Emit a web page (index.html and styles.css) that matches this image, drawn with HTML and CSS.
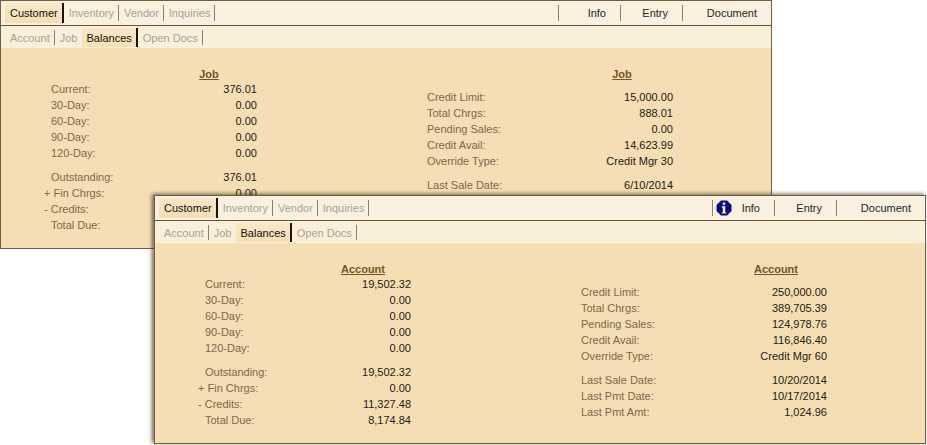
FILE: index.html
```html
<!DOCTYPE html>
<html lang="en">
<head>
<meta charset="utf-8">
<title>Balances</title>
<link rel="stylesheet" href="styles.css">
</head>
<body>
<section class="window window-back">
  <nav class="bar main-bar">
    <a class="tab active">Customer</a><a class="tab">Inventory</a><a class="tab">Vendor</a><a class="tab">Inquiries</a>
    <div class="actions">
      <a class="action"><span class="action-text">Info</span></a>
      <a class="action"><span class="action-text">Entry</span></a>
      <a class="action action-wide"><span class="action-text">Document</span></a>
    </div>
  </nav>
  <nav class="bar sub-bar">
    <a class="tab">Account</a><a class="tab tab-plain">Job</a><a class="tab active">Balances</a><a class="tab">Open Docs</a>
  </nav>
  <div class="content">
    <div class="grid grid-left">
      <h2 class="heading">Job</h2>
      <span class="label">Current:</span><span class="value">376.01</span>
      <span class="label">30-Day:</span><span class="value">0.00</span>
      <span class="label">60-Day:</span><span class="value">0.00</span>
      <span class="label">90-Day:</span><span class="value">0.00</span>
      <span class="label">120-Day:</span><span class="value">0.00</span>
      <span class="spacer"></span>
      <span class="label">Outstanding:</span><span class="value">376.01</span>
      <span class="label"><i class="sign">+</i> Fin Chrgs:</span><span class="value">0.00</span>
      <span class="label"><i class="sign">-</i> Credits:</span><span class="value"></span>
      <span class="label">Total Due:</span><span class="value"></span>
    </div>
    <div class="grid grid-right">
      <h2 class="heading">Job</h2>
      <span class="label">Credit Limit:</span><span class="value">15,000.00</span>
      <span class="label">Total Chrgs:</span><span class="value">888.01</span>
      <span class="label">Pending Sales:</span><span class="value">0.00</span>
      <span class="label">Credit Avail:</span><span class="value">14,623.99</span>
      <span class="label">Override Type:</span><span class="value">Credit Mgr 30</span>
      <span class="spacer"></span>
      <span class="label">Last Sale Date:</span><span class="value">6/10/2014</span>
    </div>
  </div>
</section>
<section class="window window-front">
  <nav class="bar main-bar">
    <a class="tab active">Customer</a><a class="tab">Inventory</a><a class="tab">Vendor</a><a class="tab">Inquiries</a>
    <div class="actions">
      <a class="action">
        <svg class="info-icon" viewBox="0 0 16 16" width="16" height="16" aria-hidden="true">
          <path d="M5 .5h6L15.500 5v6L11 15.500H5L.5 11V5z" fill="#0b0b80"/>
          <path d="M6.800 2.600h2.400v2.200H6.800zM5.800 6.200h3.400v6.200h1.100v1.200H5.700v-1.200h1.100V7.400h-1z" fill="#fff"/>
        </svg>
        <span class="action-text">Info</span>
      </a>
      <a class="action"><span class="action-text">Entry</span></a>
      <a class="action action-wide"><span class="action-text">Document</span></a>
    </div>
  </nav>
  <nav class="bar sub-bar">
    <a class="tab">Account</a><a class="tab tab-plain">Job</a><a class="tab active">Balances</a><a class="tab">Open Docs</a>
  </nav>
  <div class="content">
    <div class="grid grid-left">
      <h2 class="heading">Account</h2>
      <span class="label">Current:</span><span class="value">19,502.32</span>
      <span class="label">30-Day:</span><span class="value">0.00</span>
      <span class="label">60-Day:</span><span class="value">0.00</span>
      <span class="label">90-Day:</span><span class="value">0.00</span>
      <span class="label">120-Day:</span><span class="value">0.00</span>
      <span class="spacer"></span>
      <span class="label">Outstanding:</span><span class="value">19,502.32</span>
      <span class="label"><i class="sign">+</i> Fin Chrgs:</span><span class="value">0.00</span>
      <span class="label"><i class="sign">-</i> Credits:</span><span class="value">11,327.48</span>
      <span class="label">Total Due:</span><span class="value">8,174.84</span>
    </div>
    <div class="grid grid-right">
      <h2 class="heading">Account</h2>
      <span class="label">Credit Limit:</span><span class="value">250,000.00</span>
      <span class="label">Total Chrgs:</span><span class="value">389,705.39</span>
      <span class="label">Pending Sales:</span><span class="value">124,978.76</span>
      <span class="label">Credit Avail:</span><span class="value">116,846.40</span>
      <span class="label">Override Type:</span><span class="value">Credit Mgr 60</span>
      <span class="spacer"></span>
      <span class="label">Last Sale Date:</span><span class="value">10/20/2014</span>
      <span class="label">Last Pmt Date:</span><span class="value">10/17/2014</span>
      <span class="label">Last Pmt Amt:</span><span class="value">1,024.96</span>
    </div>
  </div>
</section>
</body>
</html>
```
FILE: styles.css
```css
* { box-sizing: border-box; }
html, body { margin: 0; height: 100%; }
body {
  position: relative;
  background: #fff;
  font-family: "Liberation Sans", Arial, sans-serif;
  font-size: 11px;
  color: #1e1a10;
  overflow: hidden;
}
.window {
  position: absolute;
  width: 772px;
  height: 249px;
  display: flex;
  flex-direction: column;
  background: #f5deb3;
  border: 1px solid #6f5f45;
}
.window-back { left: 0; top: 0; }
.window-front {
  left: 154px;
  top: 195px;
  box-shadow: -2px -1px 4px rgba(60, 50, 30, .75);
}
.bar { display: flex; align-items: stretch; flex: none; }
.main-bar {
  height: 25px;
  padding: 2px 0 2px 4px;
  background: #f9f0df;
  border-bottom: 1px solid #6b5330;
}
.sub-bar {
  height: 22px;
  padding: 2px 0 1px 4px;
  background: #f9efda;
}
.tab {
  display: flex;
  align-items: center;
  padding: 0 4px 0 5px;
  margin: 2px 0;
  color: #a8a294;
  border-right: 1px solid #8a8271;
}
.tab-plain { border-right: 0; }
.tab.active {
  margin: 0;
  color: #14110a;
  background: linear-gradient(#f7e8c9, #f5deb3);
  border-right: 2px solid #1a1208;
}
.actions { margin-left: auto; display: flex; align-items: stretch; }
.action {
  width: 62px;
  display: flex;
  align-items: center;
  margin: 2px 0;
  padding: 0 14px 0 3px;
  border-left: 1px solid #8a8271;
  color: #2a2418;
}
.action-wide { width: 89px; }
.action-text { margin-left: auto; }
.info-icon { flex: none; }
.content {
  flex: 1;
  display: flex;
  padding: 18px 0 0 43px;
  color: #7a6a48;
}
.grid { display: grid; align-content: start; line-height: 16px; }
.grid-left { grid-template-columns: 117px 96px; }
.grid-right { grid-template-columns: 144px 102px; margin-left: 170px; }
.heading {
  grid-column: 2;
  margin: 0;
  font-size: 11px;
  font-weight: bold;
  text-align: center;
  color: #73551f;
  text-decoration: underline;
}
.grid-left .heading { height: 15px; }
.grid-right .heading { height: 23px; }
.label { padding-left: 7px; white-space: nowrap; }
.grid-right .label { padding-left: 0; }
.sign { font-style: normal; margin-left: -7px; }
.value { text-align: right; color: #1e1a10; white-space: nowrap; min-height: 16px; }
.spacer { grid-column: 1 / -1; height: 8px; }
```
